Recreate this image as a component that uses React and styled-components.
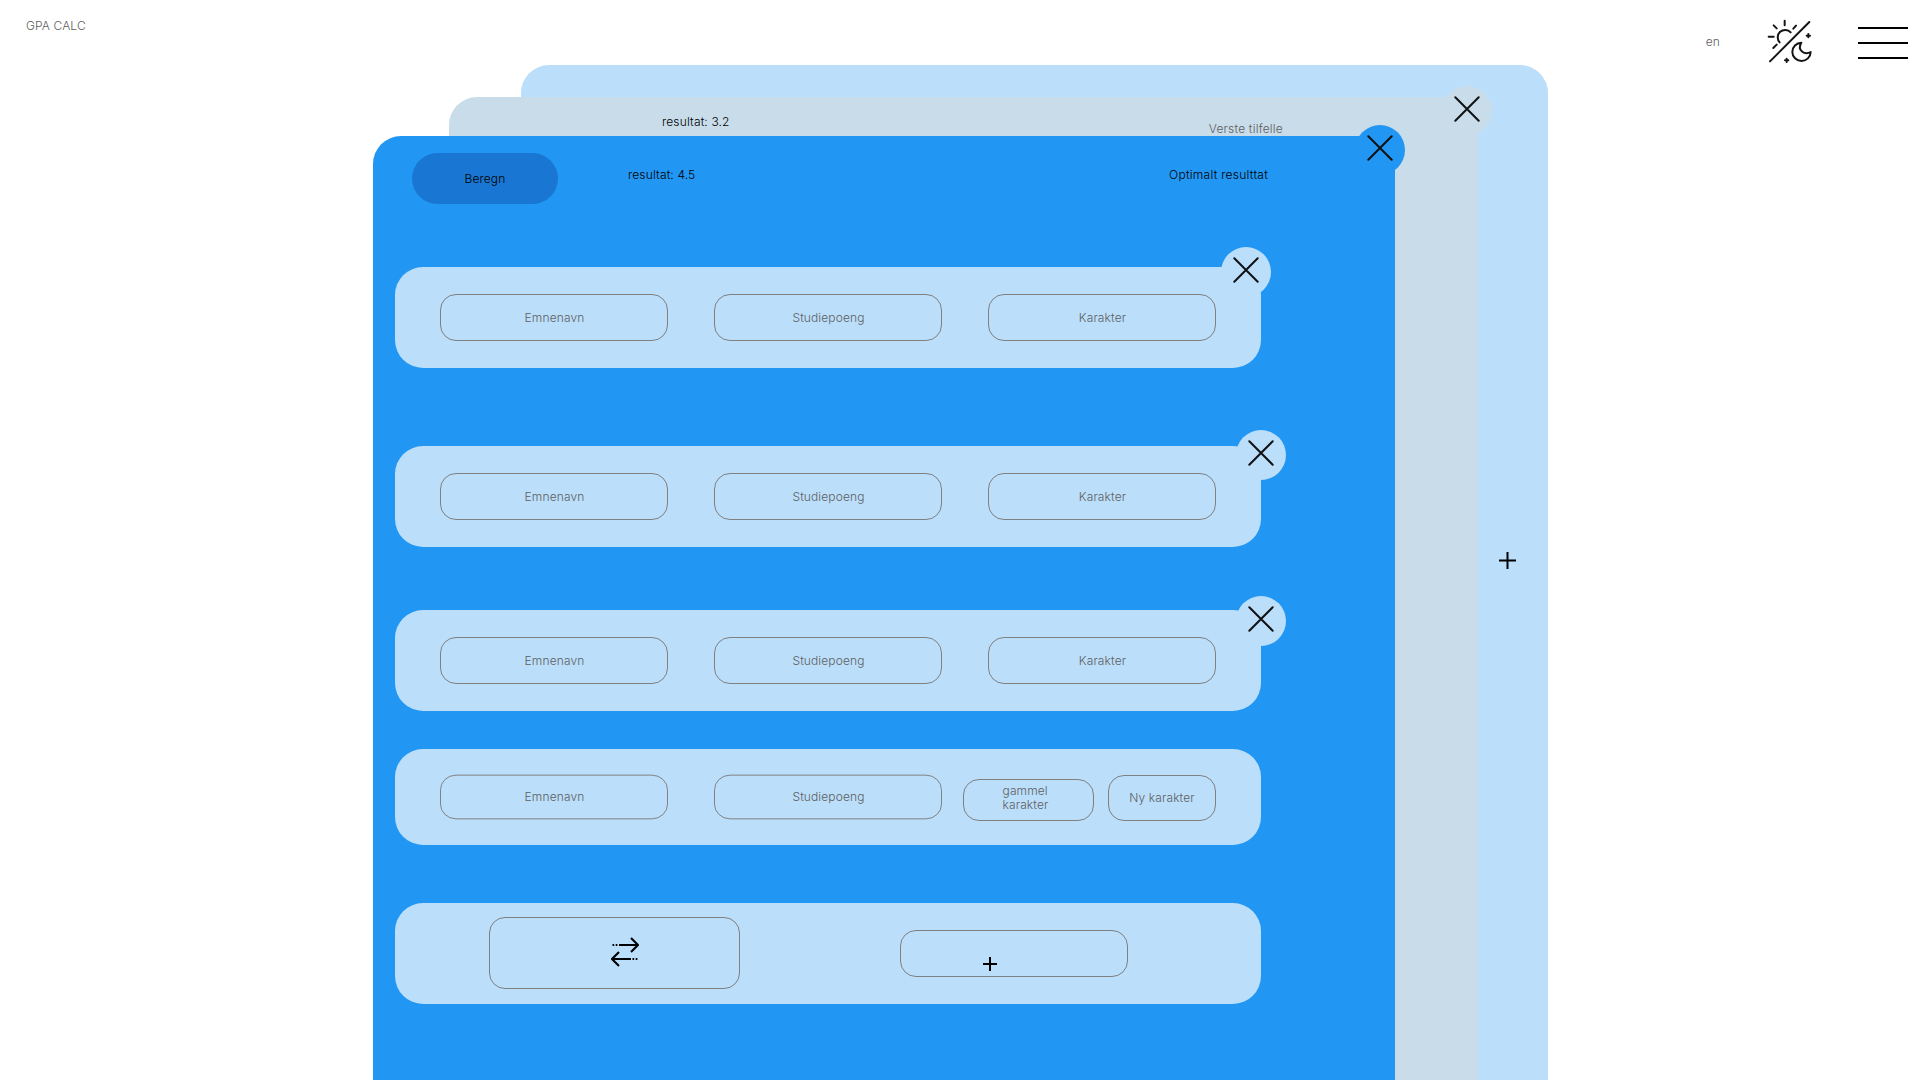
import React from "react";
import styled, { createGlobalStyle } from "styled-components";

const GlobalStyle = createGlobalStyle`
  * { box-sizing: border-box; }
  body {
    margin: 0;
    background: #fff;
    overflow: hidden;
    font-family: Inter, "Liberation Sans", sans-serif;
    font-size: 12px;
    font-weight: 300;
    line-height: 14px;
    letter-spacing: 0.12px;
    color: #000;
  }
  svg { display: block; flex: none; }
`;

const Page = styled.div`
  display: flex;
  flex-direction: column;
  height: 1080px;
  overflow: hidden;
`;

const Header = styled.header`
  display: flex;
  justify-content: space-between;
  align-items: flex-start;
  flex: none;
  height: 65px;
  padding: 0 12px 0 26px;
  color: #5e5e5e;
`;

const Brand = styled.span`
  padding-top: 19px;
`;

const Tools = styled.nav`
  display: flex;
  align-items: flex-start;
`;

const Language = styled.span`
  padding-top: 35px;
  margin-right: 47px;
`;

const ThemeToggle = styled.div`
  padding-top: 18px;
  margin-right: 46px;
`;

const Burger = styled.div`
  display: flex;
  flex-direction: column;
  gap: 13px;
  width: 50px;
  padding-top: 27px;
`;

const BurgerLine = styled.span`
  height: 2px;
  background: #000;
`;

const Stack = styled.main`
  display: grid;
  flex: 1;
  grid-template: 1015px / 1920px;
`;

const Panel = styled.section`
  grid-area: 1 / 1;
  position: relative;
  width: ${(p) => p.$width}px;
  margin: ${(p) => p.$top}px 0 0 ${(p) => p.$left}px;
  border-radius: 28px 28px 0 0;
  background: ${(p) => p.$color};
`;

const AddPanel = styled.div`
  display: flex;
  justify-content: flex-end;
  padding: 487px 32px 0 0;
`;

const PanelInfo = styled.div`
  display: flex;
  justify-content: space-between;
  padding: ${(p) => p.$pad};
`;

const Label = styled.span`
  margin-top: ${(p) => p.$drop || 0}px;
  color: ${(p) => (p.$muted ? "#5e5e5e" : "inherit")};
  letter-spacing: ${(p) => p.$tracking || 0.15}px;
  white-space: nowrap;
`;

const CalcHeader = styled.div`
  display: flex;
  align-items: flex-start;
  height: 131px;
  padding: 17px 127px 0 39px;
`;

const CalcButton = styled.button`
  width: 146px;
  height: 51px;
  margin-right: 70px;
  padding: 0;
  border: 0;
  border-radius: 25.5px;
  background: #1976d2;
  color: inherit;
  font: inherit;
  letter-spacing: inherit;
`;

const Spacer = styled.span`
  flex: 1;
`;

const Row = styled.div`
  position: relative;
  display: flex;
  align-items: ${(p) => p.$align || "center"};
  width: 866px;
  height: ${(p) => p.$height || 101}px;
  margin: 0 0 ${(p) => p.$after}px 22px;
  padding: ${(p) => p.$pad || "0 45px"};
  gap: ${(p) => (p.$gap === undefined ? 46 : p.$gap)}px;
  border-radius: 28px;
  background: #bbdefb;
`;

const Field = styled.div`
  display: flex;
  align-items: center;
  justify-content: center;
  flex: none;
  width: ${(p) => p.$width || 228}px;
  height: ${(p) => p.$height || 47}px;
  margin: ${(p) => p.$margin || 0};
  padding: ${(p) => p.$pad || "0 0 0 1px"};
  border: 1px solid #808080;
  border-radius: 16px;
  color: #5e5e5e;
  transform: ${(p) => (p.$squash ? "translateY(-0.5px) scaleY(0.95)" : "none")};
`;

const Badge = styled.div`
  position: absolute;
  top: ${(p) => p.$top}px;
  right: ${(p) => p.$right}px;
  display: flex;
  justify-content: center;
  width: 50px;
  height: 50px;
  padding-top: 10px;
  border-radius: 50%;
  background: ${(p) => p.$color};
`;

function Close({ top, right, color }) {
  return (
    <Badge $top={top} $right={right} $color={color}>
      <svg width="26" height="26" viewBox="0 0 26 26" fill="none" stroke="#111" strokeWidth="2" strokeLinecap="round">
        <path d="M1.3 1.3 24.7 24.7M24.7 1.3 1.3 24.7" />
      </svg>
    </Badge>
  );
}

function Plus({ size }) {
  return (
    <svg width={size} height={size} viewBox={`0 0 ${size} ${size}`} stroke="#000" strokeWidth="2">
      <path d={`M0 ${size / 2}H${size}M${size / 2} 0V${size}`} />
    </svg>
  );
}

function SunMoon() {
  return (
    <svg width="45" height="45" viewBox="51 24 135 135" fill="none" stroke="#151515" strokeWidth="6" strokeLinecap="round">
      <path d="M60 154 178 36" />
      <path d="M89 97A22 22 0 1 1 122 67" />
      <path d="M104 32V46M71 46 80 55M56 80H71M70 114 80 104M130 56 138 47" />
      <path d="M154 98A27.5 27.5 0 1 0 182 126C164 136 140 121 154 98Z" strokeLinejoin="round" />
      <path d="M175 72V82M170 77H180M110 146V156M105 151H115" />
    </svg>
  );
}

function Swap() {
  return (
    <svg width="28" height="30" viewBox="0 0 28 30" fill="none" stroke="#000" strokeWidth="2.1">
      <path d="M8 8H27M20 1 27 8 20 15" />
      <path d="M1.5 8H3.2M4.7 8H6.4" />
      <path d="M20 22H1M8 15 1 22 8 29" />
      <path d="M21.5 22H23.2M24.7 22H26.4" />
    </svg>
  );
}

const subjects = [
  { after: 78, top: -20, right: -10 },
  { after: 63, top: -16, right: -25 },
  { after: 38, top: -14, right: -25 },
];

export default function App() {
  return (
    <Page>
      <GlobalStyle />
      <Header>
        <Brand>GPA CALC</Brand>
        <Tools>
          <Language>en</Language>
          <ThemeToggle>
            <SunMoon />
          </ThemeToggle>
          <Burger>
            <BurgerLine />
            <BurgerLine />
            <BurgerLine />
          </Burger>
        </Tools>
      </Header>
      <Stack>
        <Panel $left={521} $top={0} $width={1027} $color="#bbdefb">
          <AddPanel>
            <Plus size={17} />
          </AddPanel>
        </Panel>
        <Panel $left={449} $top={32} $width={1029} $color="#c9dcea">
          <PanelInfo $pad="18px 195px 0 213px">
            <Label>resultat: 3.2</Label>
            <Label $muted $drop={7} $tracking={0.2}>Verste tilfelle</Label>
          </PanelInfo>
          <Close top={-11} right={-14} color="#c9dcea" />
        </Panel>
        <Panel $left={373} $top={71} $width={1022} $color="#2196f3">
          <CalcHeader>
            <CalcButton>Beregn</CalcButton>
            <Label $drop={15}>resultat: 4.5</Label>
            <Spacer />
            <Label $drop={15} $tracking={0.26}>Optimalt resulttat</Label>
          </CalcHeader>
          {subjects.map((s, i) => (
            <Row key={i} $after={s.after}>
              <Field>Emnenavn</Field>
              <Field>Studiepoeng</Field>
              <Field>Karakter</Field>
              <Close top={s.top} right={s.right} color="#bbdefb" />
            </Row>
          ))}
          <Row $height={96} $after={58} $gap={0}>
            <Field $squash $margin="0 46px 0 0">Emnenavn</Field>
            <Field $squash $margin="0 21px 0 0">Studiepoeng</Field>
            <Field $width={131} $height={42} $margin="6px 14px 0 0" $pad="0 6px 4px 0">
              <span>
                gammel
                <br />
                karakter
              </span>
            </Field>
            <Field $width={108} $height={46} $margin="2px 0 0" $pad="0">Ny karakter</Field>
          </Row>
          <Row $after={0} $align="flex-start" $gap={160} $pad="14px 0 0 94px">
            <Field $width={251} $height={72} $pad="0 0 2px 21px">
              <Swap />
            </Field>
            <Field $margin="13px 0 0" $pad="21px 48px 0 0">
              <Plus size={14} />
            </Field>
          </Row>
          <Close top={-11} right={-10} color="#2196f3" />
        </Panel>
      </Stack>
    </Page>
  );
}
